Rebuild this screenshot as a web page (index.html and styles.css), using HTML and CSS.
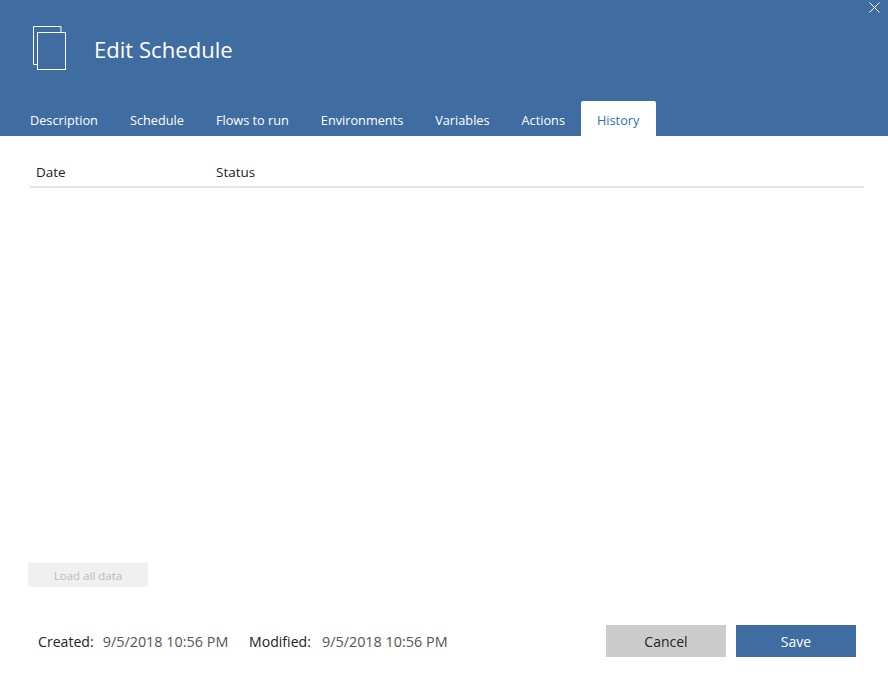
FILE: index.html
```html
<!DOCTYPE html>
<html lang="en">
<head>
<meta charset="utf-8">
<title>Edit Schedule</title>
<link rel="stylesheet" href="styles.css">
</head>
<body>
<div class="dialog">
  <header class="header">
    <button class="close" aria-label="Close">
      <svg width="11" height="11" viewBox="0 0 11 11"><path d="M0.5 0.5L10.5 10.5M10.5 0.5L0.5 10.5" stroke="#fff" stroke-width="1" fill="none"/></svg>
    </button>
    <div class="title-row">
      <svg class="doc-icon" width="34" height="45" viewBox="0 0 34 45"><path d="M4 38.5H0.5V0.5H28V6" fill="none" stroke="#fff"/><rect x="4.5" y="6.5" width="28" height="37" fill="none" stroke="#fff"/></svg>
      <h1 class="title">Edit Schedule</h1>
    </div>
    <nav class="tabs">
      <a class="tab">Description</a>
      <a class="tab">Schedule</a>
      <a class="tab">Flows to run</a>
      <a class="tab">Environments</a>
      <a class="tab">Variables</a>
      <a class="tab">Actions</a>
      <a class="tab active">History</a>
    </nav>
  </header>
  <main class="content">
    <div class="table-head">
      <div class="col-date">Date</div>
      <div class="col-status">Status</div>
    </div>
    <div class="table-body"></div>
    <button class="load" disabled>Load all data</button>
  </main>
  <footer class="footer">
    <div class="meta">
      <span class="label">Created:</span><span class="value">9/5/2018 10:56 PM</span>
      <span class="label label-wide">Modified:</span><span class="value">9/5/2018 10:56 PM</span>
    </div>
    <div class="actions">
      <button class="btn cancel">Cancel</button>
      <button class="btn save">Save</button>
    </div>
  </footer>
</div>
</body>
</html>
```
FILE: styles.css
```css
* { box-sizing: border-box; }
html, body { margin: 0; height: 100%; }
body {
  background: #fff;
  font-family: "Open Sans", "Noto Sans", sans-serif;
  color: #222;
  overflow: hidden;
}
.dialog {
  width: 888px;
  height: 691px;
  display: flex;
  flex-direction: column;
}
.header {
  position: relative;
  height: 136px;
  background: #3f6ca1;
  display: flex;
  flex-direction: column;
  flex: none;
}
.close {
  position: absolute;
  top: 2px;
  right: 8px;
  width: 11px;
  height: 11px;
  padding: 0;
  border: 0;
  background: none;
  display: block;
}
.close svg { display: block; }
.title-row {
  display: flex;
  align-items: center;
  height: 101px;
  padding: 1px 0 0 33px;
}
.doc-icon { display: block; margin-bottom: 6px; }
.title {
  margin: 0 0 0 27px;
  font-size: 22.1px;
  font-weight: 400;
  color: #fff;
  position: relative;
  top: -2px;
}
.tabs {
  display: flex;
  height: 35px;
  padding-left: 14px;
}
.tab {
  padding: 0 16px;
  font-size: 12.73px;
  line-height: 38px;
  color: #fff;
  white-space: nowrap;
}
.tab.active {
  background: #fff;
  color: #2f6fb0;
  border-radius: 2px 2px 0 0;
  padding-right: 17px;
}
.content {
  flex: 1;
  display: flex;
  flex-direction: column;
  padding: 0 24px 0 28px;
  min-height: 0;
}
.table-head {
  display: flex;
  margin: 26px 0 0 2px;
  height: 26px;
  padding-left: 6px;
  border-bottom: 2px solid #e6e6e6;
  font-size: 13.5px;
  line-height: 20px;
  color: #222;
}
.col-date { width: 180px; }
.table-body { flex: 1; }
.load {
  width: 120px;
  height: 24px;
  border: 0;
  padding: 0;
  background: #f0f0f0;
  color: #bbb;
  font-family: inherit;
  font-size: 11.5px;
}
.footer {
  flex: none;
  height: 104px;
  display: flex;
  justify-content: space-between;
  align-items: flex-start;
  padding: 38px 32px 0 38px;
}
.meta {
  line-height: 33px;
  font-size: 14.1px;
  white-space: nowrap;
}
.label { color: #222; margin-right: 9px; }
.label-wide { margin-right: 11px; }
.value { color: #555; margin-right: 17px; font-size: 14.4px; }
.actions { display: flex; gap: 10px; }
.btn {
  width: 120px;
  height: 32px;
  border: 0;
  padding: 0;
  font-family: inherit;
  font-size: 14px;
}
.cancel { background: #ccc; color: #222; }
.save { background: #3f6ca1; color: #fff; }
```
